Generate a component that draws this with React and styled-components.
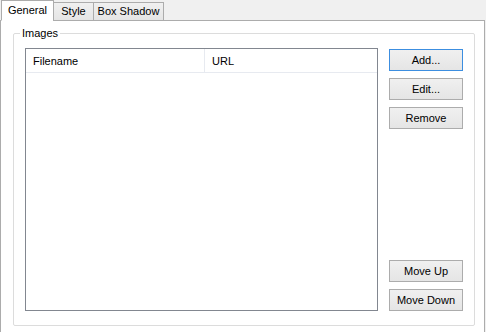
import React from 'react'
import styled, { createGlobalStyle } from 'styled-components'

const GlobalStyle = createGlobalStyle`
  html, body {
    margin: 0;
    padding: 0;
    background: #f0f0f0;
  }
  * {
    box-sizing: border-box;
  }
`

const Window = styled.div`
  width: 486px;
  height: 332px;
  overflow: hidden;
  display: flex;
  flex-direction: column;
  background: #f0f0f0;
  font-family: "Liberation Sans", Arial, sans-serif;
  font-size: 11px;
  color: #000;
`

const TabStrip = styled.div`
  display: flex;
  align-items: flex-end;
  height: 21px;
  padding-left: 1px;
  margin-bottom: -1px;
  position: relative;
  z-index: 1;
`

const Tab = styled.div`
  width: ${props => props.width};
  height: ${props => (props.active ? '21px' : '19px')};
  padding-top: ${props => (props.active ? '3px' : '2px')};
  border: 1px solid #acacac;
  border-bottom: ${props => (props.active ? '1px solid #fff' : '1px solid #acacac')};
  margin-left: ${props => (props.first ? '0' : '-1px')};
  background: ${props => (props.active ? '#fff' : 'linear-gradient(#f0f0f0, #e5e5e5)')};
  white-space: nowrap;
  text-align: center;
  line-height: 13px;
`

const Panel = styled.div`
  flex: 1;
  width: 485px;
  background: #fff;
  border: 1px solid #acacac;
  border-bottom: none;
  padding: 6px 9px 0 12px;
`

const GroupBox = styled.fieldset`
  margin: 0;
  padding: 8px 11px 14px 11px;
  border: 1px solid #dcdcdc;
  border-radius: 2px;
  min-width: 0;
`

const GroupLabel = styled.legend`
  padding: 0 2px;
  margin-left: -5px;
  line-height: 13px;
`

const Row = styled.div`
  display: flex;
  gap: 11px;
  height: 263px;
`

const ListView = styled.div`
  width: 354px;
  height: 100%;
  border: 1px solid #828790;
  background: #fff;
`

const Header = styled.div`
  display: flex;
  height: 24px;
  border-bottom: 1px solid #e7eaf0;
`

const HeaderCell = styled.div`
  width: ${props => props.width || 'auto'};
  flex: ${props => (props.width ? 'none' : '1')};
  padding-left: 7px;
  display: flex;
  align-items: center;
  border-right: ${props => (props.width ? '1px solid #e7eaf0' : 'none')};
`

const ButtonColumn = styled.div`
  display: flex;
  flex-direction: column;
  gap: 7px;
  width: 74px;
  padding-top: 1px;
`

const Spacer = styled.div`
  flex: 1;
`

const Button = styled.button`
  width: 74px;
  height: 22px;
  padding: 0;
  border: 1px solid ${props => (props.primary ? '#3c8ee0' : '#acacac')};
  background: linear-gradient(#f0f0f0, #e5e5e5);
  font-family: "Liberation Sans", Arial, sans-serif;
  font-size: 11px;
  color: #000;
  text-align: center;
`

export default function App() {
  return (
    <Window>
      <GlobalStyle />
      <TabStrip>
        <Tab active first width="53px">General</Tab>
        <Tab width="41px">Style</Tab>
        <Tab width="71px">Box Shadow</Tab>
      </TabStrip>
      <Panel>
        <GroupBox>
          <GroupLabel>Images</GroupLabel>
          <Row>
            <ListView>
              <Header>
                <HeaderCell width="179px">Filename</HeaderCell>
                <HeaderCell>URL</HeaderCell>
              </Header>
            </ListView>
            <ButtonColumn>
              <Button primary>Add...</Button>
              <Button>Edit...</Button>
              <Button>Remove</Button>
              <Spacer />
              <Button>Move Up</Button>
              <Button>Move Down</Button>
            </ButtonColumn>
          </Row>
        </GroupBox>
      </Panel>
    </Window>
  )
}
